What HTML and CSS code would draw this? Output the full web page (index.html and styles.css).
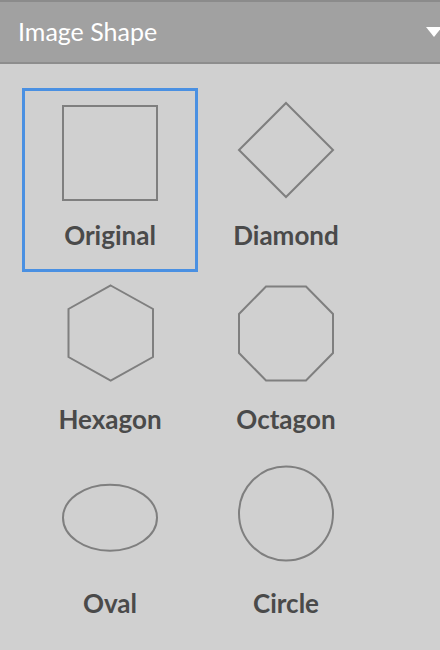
FILE: index.html
```html
<!DOCTYPE html>
<html lang="en">
    <head>
        <meta charset="UTF-8">
        <meta name="viewport" content="width=device-width, initial-scale=1.0">
        <title>Image Shape</title>
        <link rel="stylesheet" href="styles.css">
    </head>

    <body>
        <div class="panelHeader">
            <span class="panelTitle">Image Shape</span>
            <span class="caret"></span>
        </div>

        <div class="shapeGrid">
            <div class="shapeCell selected">
                <svg class="shapeIcon" viewBox="0 0 100 104">
                    <rect x="3" y="8" width="94" height="94"></rect>
                </svg>
                <span class="shapeName">Original</span>
            </div>
            <div class="shapeCell">
                <svg class="shapeIcon" viewBox="0 0 100 104">
                    <polygon points="50,5 97,52 50,99 3,52"></polygon>
                </svg>
                <span class="shapeName">Diamond</span>
            </div>

            <div class="shapeCell">
                <svg class="shapeIcon" viewBox="0 0 100 104">
                    <polygon points="50.7,3.5 93,27 93,75 50.7,98.5 8.5,75 8.5,27"></polygon>
                </svg>
                <span class="shapeName">Hexagon</span>
            </div>
            <div class="shapeCell">
                <svg class="shapeIcon" viewBox="0 0 100 104">
                    <polygon points="30,4.5 70,4.5 97,32 97,71 70,98.5 30,98.5 3,71 3,32"></polygon>
                </svg>
                <span class="shapeName">Octagon</span>
            </div>

            <div class="shapeCell">
                <svg class="shapeIcon" viewBox="0 0 100 104">
                    <ellipse cx="50" cy="51.7" rx="47" ry="33"></ellipse>
                </svg>
                <span class="shapeName">Oval</span>
            </div>
            <div class="shapeCell">
                <svg class="shapeIcon" viewBox="0 0 100 104">
                    <circle cx="50" cy="47.5" r="47"></circle>
                </svg>
                <span class="shapeName">Circle</span>
            </div>
        </div>
    </body>
</html>
```

FILE: styles.css
```css
body{
    margin: 0;
    background-color: #d0d0d0;
    font-family: Lato, "Open Sans", sans-serif;
    overflow: hidden;
}

.panelHeader{
    display: flex;
    align-items: center;
    justify-content: space-between;
    height: 57px;
    padding: 0 0 3px 18px;
    background-color: #a1a1a1;
    border-top: 2px solid #8b8b8b;
    border-bottom: 2px solid #8d8d8d;
}

.panelTitle{
    color: #ffffff;
    font-size: 25px;
    line-height: 30px;
}

.caret{
    width: 0;
    height: 0;
    margin: 3px -2px 0 0;
    border-left: 8px solid transparent;
    border-right: 8px solid transparent;
    border-top: 10px solid #ffffff;
}

.shapeGrid{
    display: grid;
    grid-template-columns: 176px 176px;
    grid-auto-rows: 184px;
    padding: 24px 0 0 22px;
}

.shapeCell{
    box-sizing: border-box;
    display: flex;
    flex-direction: column;
    align-items: center;
    padding-top: 10px;
    border: 3px solid transparent;
    cursor: pointer;
}

.shapeCell.selected{
    border-color: #4a90e2;
}

.shapeIcon{
    width: 100px;
    height: 104px;
    margin-top: -3px;
    overflow: visible;
    fill: none;
    stroke: #7f7f7f;
    stroke-width: 2;
}

.shapeName{
    margin-top: 18px;
    color: #4a4a4a;
    font-size: 26px;
    font-weight: bold;
    line-height: 30px;
}
```
